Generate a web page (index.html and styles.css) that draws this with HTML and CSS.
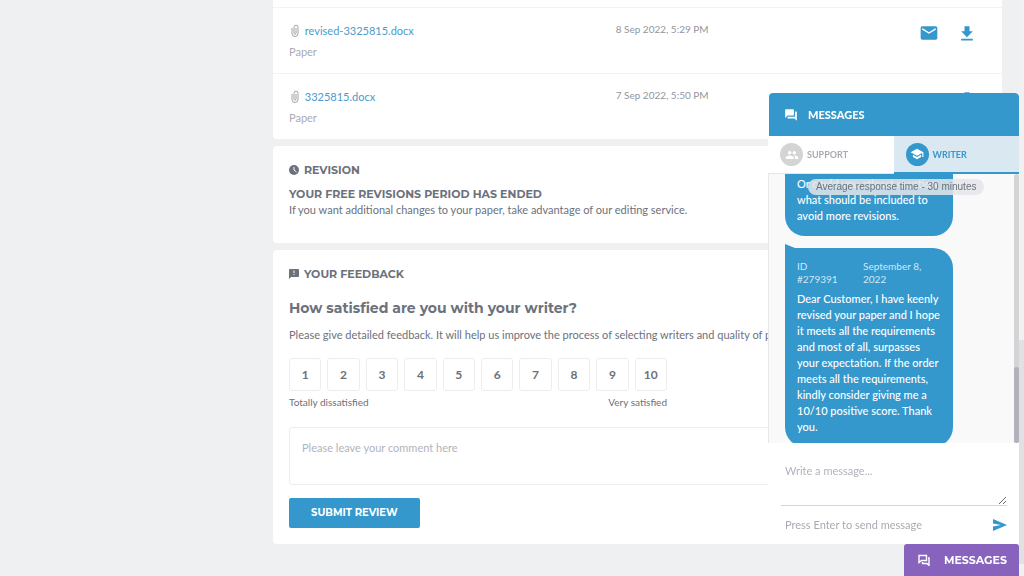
FILE: index.html
```html
<!DOCTYPE html>
<html lang="en">
<head>
  <meta charset="UTF-8">
  <meta name="viewport" content="width=device-width, initial-scale=1.0">
  <title>Order 3325815</title>
  <link rel="stylesheet" href="styles.css">
</head>
<body>
  <main class="content">
    <section class="card files">
      <table class="file-table">
        <tr>
          <td class="file-name">
            <svg class="clip" viewBox="0 0 10 14"><path d="M2 4v5.500a3 3 0 0 0 6 0V3.200a2 2 0 0 0-4 0v6a1 1 0 0 0 2 0V4" fill="none" stroke="currentColor"/></svg>
            <a href="#">revised-3325815.docx</a>
            <div class="file-type">Paper</div>
          </td>
          <td class="file-date">8 Sep 2022, 5:29 PM</td>
          <td class="file-actions">
            <div class="actions">
              <button class="icon-btn" aria-label="Email file"><svg width="20" height="20" viewBox="0 0 24 24"><path d="M20 4H4c-1.100 0-2 .9-2 2v12c0 1.100.9 2 2 2h16c1.100 0 2-.9 2-2V6c0-1.100-.9-2-2-2zm0 4l-8 5-8-5V6l8 5 8-5v2z"/></svg></button>
              <button class="icon-btn" aria-label="Download file"><svg width="20" height="20" viewBox="0 0 24 24"><path d="M19 10h-4V4H9v6H5l7 7 7-7zM5 19v2h14v-2H5z"/></svg></button>
            </div>
          </td>
        </tr>
        <tr>
          <td class="file-name">
            <svg class="clip" viewBox="0 0 10 14"><path d="M2 4v5.500a3 3 0 0 0 6 0V3.200a2 2 0 0 0-4 0v6a1 1 0 0 0 2 0V4" fill="none" stroke="currentColor"/></svg>
            <a href="#">3325815.docx</a>
            <div class="file-type">Paper</div>
          </td>
          <td class="file-date">7 Sep 2022, 5:50 PM</td>
          <td class="file-actions">
            <div class="actions">
              <button class="icon-btn" aria-label="Download file"><svg width="20" height="20" viewBox="0 0 24 24"><path d="M19 10h-4V4H9v6H5l7 7 7-7zM5 19v2h14v-2H5z"/></svg></button>
            </div>
          </td>
        </tr>
      </table>
    </section>

    <section class="card revision">
      <h2 class="card-title">
        <svg width="10" height="10" viewBox="0 0 20 20"><circle cx="10" cy="10" r="10" fill="currentColor"/><path d="M10 4v6l5 4" fill="none" stroke="#fff" stroke-width="2"/></svg>
        REVISION
      </h2>
      <h3 class="revision-status">YOUR FREE REVISIONS PERIOD HAS ENDED</h3>
      <p>If you want additional changes to your paper, take advantage of our editing service.</p>
    </section>

    <section class="card feedback">
      <h2 class="card-title">
        <svg width="10" height="10" viewBox="2 2 20 20"><path d="M20 2H4c-1.100 0-2 .9-2 2v18l4-4h14c1.100 0 2-.9 2-2V4c0-1.100-.9-2-2-2zm-7 12h-2v-2h2v2zm0-4h-2V5h2v5z" fill="currentColor"/></svg>
        YOUR FEEDBACK
      </h2>
      <form>
        <h3 class="question">How satisfied are you with your writer?</h3>
        <p>Please give detailed feedback. It will help us improve the process of selecting writers and quality of papers.</p>
        <div class="rating">
          <label><input type="radio" name="score" value="1">1</label>
          <label><input type="radio" name="score" value="2">2</label>
          <label><input type="radio" name="score" value="3">3</label>
          <label><input type="radio" name="score" value="4">4</label>
          <label><input type="radio" name="score" value="5">5</label>
          <label><input type="radio" name="score" value="6">6</label>
          <label><input type="radio" name="score" value="7">7</label>
          <label><input type="radio" name="score" value="8">8</label>
          <label><input type="radio" name="score" value="9">9</label>
          <label><input type="radio" name="score" value="10">10</label>
        </div>
        <div class="rating-legend"><span>Totally dissatisfied</span><span>Very satisfied</span></div>
        <textarea class="comment" aria-label="Comment" placeholder="Please leave your comment here"></textarea>
        <button type="submit" class="submit-btn">SUBMIT REVIEW</button>
      </form>
    </section>
  </main>

  <div class="page-scroll"><div class="page-thumb"></div></div>

  <aside class="chat">
    <div class="chat-window">
      <div class="chat-header">
        <svg width="14" height="14" viewBox="0 0 24 24"><path d="M21 6h-2v9H6v2c0 .55.45 1 1 1h11l4 4V7c0-.55-.45-1-1-1zm-4 6V3c0-.55-.45-1-1-1H3c-.55 0-1 .45-1 1v14l4-4h10c.55 0 1-.45 1-1z" fill="#fff"/></svg>
        MESSAGES
      </div>
      <div class="tabs">
        <button class="tab">
          <span class="tab-icon"><svg width="14" height="14" viewBox="0 0 24 24"><path d="M16 11c1.660 0 3-1.340 3-3s-1.340-3-3-3-3 1.340-3 3 1.340 3 3 3zm-8 0c1.660 0 3-1.340 3-3S9.660 5 8 5 5 6.340 5 8s1.340 3 3 3zm0 2c-2.330 0-7 1.170-7 3.500V19h14v-2.500c0-2.330-4.670-3.500-7-3.500zm8 0c-.29 0-.62.02-.97.05 1.160.84 1.970 1.970 1.970 3.450V19h6v-2.500c0-2.330-4.670-3.500-7-3.500z" fill="#fff"/></svg></span>
          SUPPORT
        </button>
        <button class="tab active">
          <span class="tab-icon"><svg width="14" height="14" viewBox="0 0 24 24"><path d="M5 13.180v4L12 21l7-3.820v-4L12 17l-7-3.820zM12 3L1 9l11 6 9-4.910V17h2V9L12 3z" fill="#fff"/></svg></span>
          WRITER
        </button>
      </div>
      <div class="messages">
        <div class="message-list">
          <div class="bubble">Or could you atleast mention what should be included to avoid more revisions.</div>
          <div class="bubble tail">
            <div class="meta"><span>ID #279391</span><span>September 8, 2022</span></div>
            Dear Customer, I have keenly revised your paper and I hope it meets all the requirements and most of all, surpasses your expectation. If the order meets all the requirements, kindly consider giving me a 10/10 positive score. Thank you.
          </div>
        </div>
        <div class="chat-scroll"><div class="chat-thumb"></div></div>
        <div class="notice">Average response time - 30 minutes</div>
      </div>
      <form class="composer">
        <textarea class="message-input" aria-label="Message" placeholder="Write a message..."></textarea>
        <div class="send-row">
          <span>Press Enter to send message</span>
          <button class="send-btn" aria-label="Send"><svg width="14" height="12" viewBox="0 0 14 12"><path d="M0 0l14 6-14 6V7.500L8 6 0 4.500z" fill="#3498cd"/></svg></button>
        </div>
      </form>
    </div>
    <button class="chat-toggle">
      <svg width="12" height="12" viewBox="0 0 12 12"><path d="M1 1.500h7.500v5H3.500L1 8.500zM10 4h1v7.500L9 9.500H4.500V8" fill="none" stroke="#fff" stroke-width="1.400"/></svg>
      MESSAGES
    </button>
  </aside>
</body>
</html>
```
FILE: styles.css
```css
* {
  box-sizing: border-box;
}
body {
  margin: 0;
  background: #eff0f2;
  color: #6c717c;
  font-family: Lato, sans-serif;
  font-size: 11px;
  line-height: 16px;
  overflow: hidden;
}
button,
textarea {
  font-family: inherit;
}
button {
  border: none;
  cursor: pointer;
}
h2,
h3,
p {
  margin: 0;
}
.content {
  display: flex;
  flex-direction: column;
  gap: 7px;
  padding: 0 22px 32px 273px;
}
.card {
  background: #fff;
  border-radius: 4px;
  padding: 16px;
}
.card-title {
  display: flex;
  align-items: center;
  gap: 5px;
  font: bold 11px/16px Montserrat, Inter, sans-serif;
}

/* Files */
.files {
  padding: 7px 0 0;
  border-radius: 0 0 4px 4px;
}
.file-table {
  width: 100%;
  border-spacing: 0;
  table-layout: fixed;
}
.file-table td {
  height: 66px;
  padding: 15px 0 0;
  border-top: 1px solid #f3f3f5;
  vertical-align: top;
}
.file-table .file-name {
  width: 47%;
  padding-left: 16px;
}
.clip {
  width: 10px;
  height: 14px;
  margin: 0 2px 2px 1px;
  color: #a0a3aa;
  vertical-align: middle;
}
.file-name a {
  color: #4a9bcd;
  text-decoration: none;
}
.file-type {
  margin-top: 4px;
  color: #a9abb3;
}
.file-table .file-date {
  color: #9296a0;
  font-size: 10px;
  line-height: 12px;
}
.actions {
  display: flex;
  justify-content: flex-end;
  gap: 18px;
  padding-right: 25px;
}
.icon-btn {
  display: flex;
  padding: 0;
  background: none;
}
.icon-btn svg {
  fill: #3498cd;
}

/* Revision */
.revision {
  padding-bottom: 25px;
}
.revision-status {
  margin-top: 8px;
  font: bold 11px/16px Montserrat, Inter, sans-serif;
}

/* Feedback */
.question {
  margin: 16px 0 9px;
  font: bold 14px/20px Montserrat, Inter, sans-serif;
}
.rating {
  display: grid;
  grid-template-columns: repeat(10, 1fr);
  gap: 6px;
  max-width: 378px;
  margin-top: 15px;
}
.rating label {
  display: flex;
  align-items: center;
  justify-content: center;
  height: 33px;
  border: 1px solid #ededf0;
  border-radius: 3px;
  font-size: 12px;
  font-weight: bold;
  cursor: pointer;
}
.rating input {
  appearance: none;
  width: 0;
  margin: 0;
}
.rating-legend {
  display: flex;
  justify-content: space-between;
  max-width: 378px;
  margin: 3px 0 17px;
  font-size: 10px;
}
.comment {
  display: block;
  width: 100%;
  height: 58px;
  padding: 12px;
  border: 1px solid #ededf0;
  border-radius: 3px;
  font-size: 11px;
  line-height: 16px;
  resize: none;
}
textarea::placeholder {
  color: #b1b3bc;
}
.submit-btn {
  margin-top: 13px;
  padding: 0 22px;
  height: 30px;
  background: #3498cd;
  color: #fff;
  border-radius: 2px;
  font: bold 10px/16px Montserrat, Inter, sans-serif;
}

/* Scrollbar of the page */
.page-scroll {
  position: fixed;
  top: 0;
  right: 0;
  bottom: 0;
  width: 5px;
  padding-top: 340px;
  background: #f1f1f2;
}
.page-thumb {
  height: 224px;
  background: #e1e1e4;
}

/* Chat */
.chat {
  position: fixed;
  right: 5px;
  bottom: 0;
  width: 251px;
  display: flex;
  flex-direction: column;
  align-items: flex-end;
}
.chat-window {
  width: 100%;
  background: #fff;
  border-radius: 4px 4px 0 0;
  overflow: hidden;
}
.chat-header {
  display: flex;
  align-items: center;
  gap: 10px;
  height: 43px;
  margin-left: 1px;
  padding: 0 15px;
  background: #3498cd;
  border-radius: 4px 4px 0 0;
  color: #fff;
  font-weight: 900;
}
.tabs {
  display: grid;
  grid-template-columns: 1fr 1fr;
  height: 38px;
}
.tab {
  display: flex;
  align-items: center;
  gap: 4px;
  padding: 0 12px;
  background: #fff;
  border-bottom: 1px solid #e4e4e6;
  color: #a9abb3;
  font-size: 9px;
  font-weight: bold;
}
.tab-icon {
  display: flex;
  align-items: center;
  justify-content: center;
  width: 23px;
  height: 23px;
  background: #d4d4d4;
  border-radius: 50%;
}
.tab.active {
  background: #d9e8f1;
  border-bottom: 2px solid #3498cd;
  color: #3498cd;
}
.active .tab-icon {
  background: #3498cd;
}
.messages {
  position: relative;
  display: flex;
  height: 269px;
  background: #f9f9fa;
  border-left: 1px solid #e8e8ea;
}
.message-list {
  flex: 1;
  display: flex;
  flex-direction: column;
  gap: 12px;
  padding: 0 16px;
  overflow: hidden;
}
.bubble {
  width: 168px;
  padding: 2px 12px 12px;
  background: #3498cd;
  border-radius: 0 0 20px 20px;
  color: #fff;
  font-weight: 500;
}
.bubble.tail {
  position: relative;
  padding-top: 12px;
  border-radius: 0 20px 20px 20px;
}
.tail::before {
  content: "";
  position: absolute;
  top: -4px;
  left: 0;
  border-left: 10px solid #3498cd;
  border-top: 4px solid transparent;
}
.meta {
  display: grid;
  grid-template-columns: 50px 60px;
  gap: 16px;
  margin-bottom: 5px;
  color: #d3e7f3;
  font-size: 10px;
  font-weight: 400;
  line-height: 13px;
}
.chat-scroll {
  display: flex;
  align-items: flex-end;
  width: 5px;
  background: #d4d4d6;
  border-radius: 3px;
}
.chat-thumb {
  width: 100%;
  height: 76px;
  background: #b1b1bb;
  border-radius: 3px;
}
.notice {
  position: absolute;
  top: 5px;
  left: 39px;
  padding: 0 8px;
  background: rgba(228, 230, 233, 0.85);
  border-radius: 8px;
  color: #6c717c;
  font: 10px/16px "Liberation Sans", Arial, sans-serif;
}
.composer {
  padding: 12px 12px 0 13px;
  height: 101px;
}
.message-input {
  display: block;
  width: 100%;
  height: 51px;
  padding: 8px 4px;
  border: none;
  border-bottom: 1px solid #d4d4d6;
  font-size: 11px;
  line-height: 16px;
  resize: vertical;
}
.send-row {
  display: flex;
  align-items: center;
  justify-content: space-between;
  height: 38px;
  padding-left: 4px;
  color: #a9abb3;
}
.send-btn {
  display: flex;
  padding: 0;
  background: none;
}
.chat-toggle {
  display: flex;
  align-items: center;
  gap: 14px;
  height: 32px;
  padding: 0 12px 0 14px;
  background: #8763bd;
  border-radius: 3px 3px 0 0;
  color: #fff;
  font: bold 11px/16px Montserrat, Inter, sans-serif;
}
```
